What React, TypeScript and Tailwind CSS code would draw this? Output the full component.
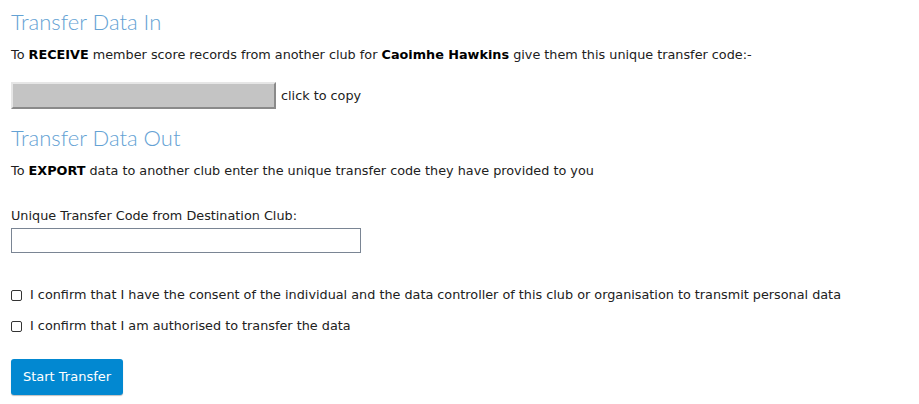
import React, { useState } from 'react';

export default function App() {
  const [code, setCode] = useState('');
  const [consent, setConsent] = useState(false);
  const [authorised, setAuthorised] = useState(false);

  return (
    <div className="min-h-[404px] w-full bg-white px-[11px] pt-[8px] text-[12.8px] text-[#212121] [font-family:'DejaVu_Sans',sans-serif]">
      {/* Transfer in */}
      <h2 className="text-[22px] font-light leading-[28px] text-[#64a2d4] [font-family:Lato,sans-serif]">Transfer Data In</h2>
      <p className="mt-[9px] leading-[20px]">
        To <b className="text-black">RECEIVE</b> member score records from another club for{' '}
        <b className="text-black">Caoimhe Hawkins</b> give them this unique transfer code:-
      </p>
      <div className="mt-[17px] flex items-center">
        <div className="h-[27px] w-[265px] border-2 border-t-[#e6e6e6] border-l-[#e6e6e6] border-b-[#8a8a8a] border-r-[#8a8a8a] bg-[#c4c4c4]" />
        <span className="ml-[5px] leading-[20px]">click to copy</span>
      </div>

      {/* Transfer out */}
      <h2 className="mt-[15px] text-[22px] font-light leading-[28px] text-[#64a2d4] [font-family:Lato,sans-serif]">Transfer Data Out</h2>
      <p className="mt-[9px] leading-[20px]">
        To <b className="text-black">EXPORT</b> data to another club enter the unique transfer code they have provided to you
      </p>

      <label className="mt-[25px] block leading-[20px]">Unique Transfer Code from Destination Club:</label>
      <input
        value={code}
        onChange={(e) => setCode(e.target.value)}
        className="mt-[2px] block h-[25px] w-[350px] border border-[#7a8594] bg-white px-1 outline-none"
      />

      <label className="mt-[32px] flex items-center leading-[20px]">
        <input
          type="checkbox"
          checked={consent}
          onChange={(e) => setConsent(e.target.checked)}
          className="mr-[8px] h-[11px] w-[11px] appearance-none rounded-[2px] border-[1.5px] border-[#333] bg-white"
        />
        I confirm that I have the consent of the individual and the data controller of this club or organisation to transmit personal data
      </label>
      <label className="mt-[11px] flex items-center leading-[20px]">
        <input
          type="checkbox"
          checked={authorised}
          onChange={(e) => setAuthorised(e.target.checked)}
          className="mr-[8px] h-[11px] w-[11px] appearance-none rounded-[2px] border-[1.5px] border-[#333] bg-white"
        />
        I confirm that I am authorised to transfer the data
      </label>

      <button className="mt-[23px] h-[36px] w-[112px] rounded-[3px] bg-[#0288d1] text-[13px] text-white shadow-[0_1px_1px_rgba(0,0,0,0.25)]">
        Start Transfer
      </button>
    </div>
  );
}
